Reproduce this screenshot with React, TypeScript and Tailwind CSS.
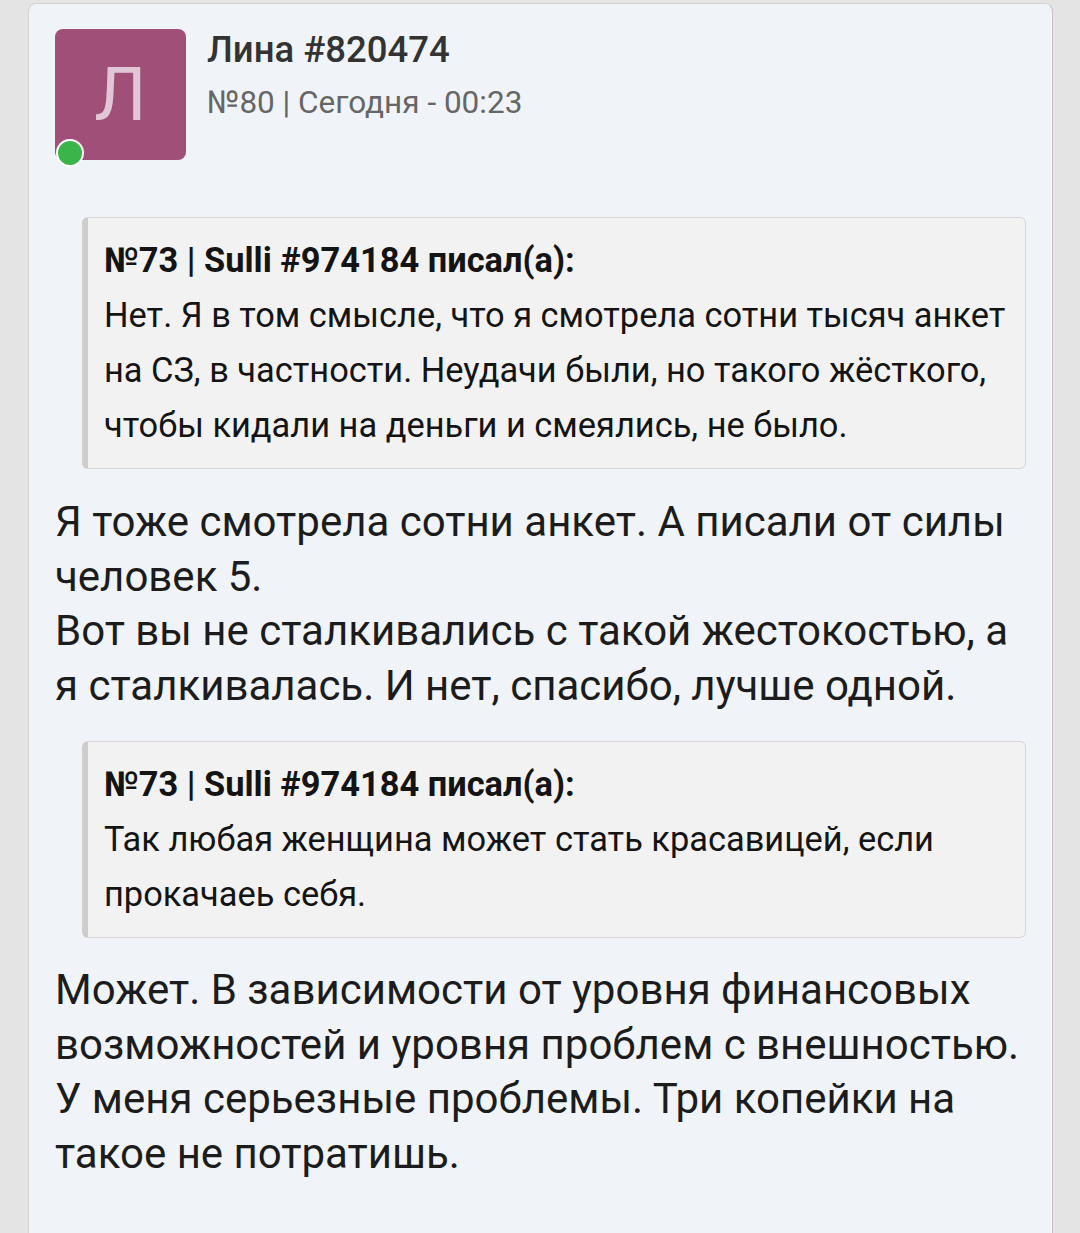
const QUOTE_HEAD = '№73 | Sulli #974184 писал(а):';

function Quote({ lines }: { lines: string[] }) {
  return (
    <div className="ml-[27px] whitespace-nowrap rounded-md border border-[#d6d6d6] border-l-[6px] border-l-[#cdcdcd] bg-[#f2f2f2] pl-[16px] pr-2 pt-[15px] pb-[15px] text-[34.4px] leading-[55px] text-[#141414]">
      <div className="font-bold">{QUOTE_HEAD}</div>
      {lines.map((l) => (
        <div key={l}>{l}</div>
      ))}
    </div>
  );
}

function Body({ lines }: { lines: string[] }) {
  return (
    <div className="whitespace-nowrap text-[42px] leading-[54.5px] text-[#1c1c1c]">
      {lines.map((l) => (
        <div key={l}>{l}</div>
      ))}
    </div>
  );
}

export default function App() {
  return (
    <div
      className="min-h-[1233px] bg-[#e4e4e4] pl-[28px] pr-[27px] pt-[3px]"
      style={{ fontFamily: 'Roboto, "Noto Sans", sans-serif' }}
    >
      <div className="h-[1240px] rounded-t-lg border border-[#d4d4d4] border-r-[#c4c4c4] bg-[#f0f4f8] pl-[26px] pr-[26px] pt-[25px]">
        <div className="flex items-start">
          <div className="relative h-[131px] w-[131px] shrink-0 rounded-lg bg-[#a04f78]">
            <div className="flex h-full w-full items-center justify-center text-[74px] leading-none text-[#e1c6d6]">
              Л
            </div>
            <div className="absolute left-[1px] bottom-[-7px] h-[28px] w-[28px] rounded-full border-[2.5px] border-white bg-[#39b54a]" />
          </div>
          <div className="ml-[21px] pt-[3px]">
            <div className="text-[36.5px] font-medium leading-none text-[#333333]">Лина #820474</div>
            <div className="mt-[18px] text-[31.5px] leading-none text-[#666666]">№80 | Сегодня - 00:23</div>
          </div>
        </div>

        <div className="mt-[57px]">
          <Quote
            lines={[
              'Нет. Я в том смысле, что я смотрела сотни тысяч анкет',
              'на СЗ, в частности. Неудачи были, но такого жёсткого,',
              'чтобы кидали на деньги и смеялись, не было.',
            ]}
          />
        </div>

        <div className="mt-[26px]">
          <Body
            lines={[
              'Я тоже смотрела сотни анкет. А писали от силы',
              'человек 5.',
              'Вот вы не сталкивались с такой жестокостью, а',
              'я сталкивалась. И нет, спасибо, лучше одной.',
            ]}
          />
        </div>

        <div className="mt-[28px]">
          <Quote
            lines={[
              'Так любая женщина может стать красавицей, если',
              'прокачаеь себя.',
            ]}
          />
        </div>

        <div className="mt-[25px]">
          <Body
            lines={[
              'Может. В зависимости от уровня финансовых',
              'возможностей и уровня проблем с внешностью.',
              'У меня серьезные проблемы. Три копейки на',
              'такое не потратишь.',
            ]}
          />
        </div>
      </div>
    </div>
  );
}
